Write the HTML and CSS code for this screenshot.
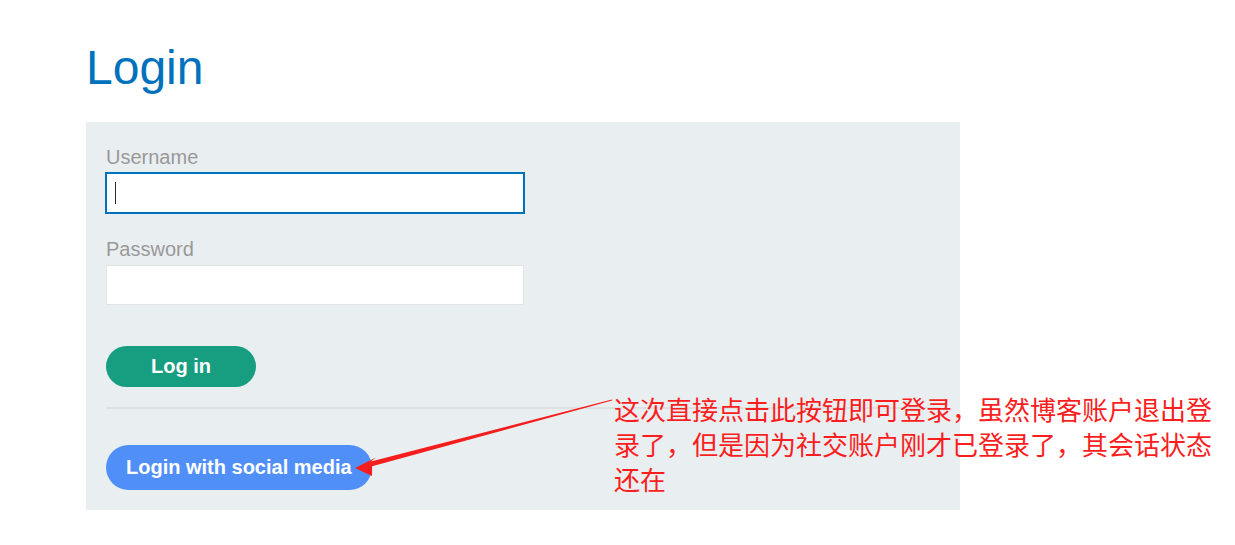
FILE: index.html
```html
<!DOCTYPE html>
<html lang="en">
<head>
<meta charset="utf-8">
<title>Login</title>
<link rel="stylesheet" href="styles.css">
</head>
<body>
  <main class="page">
    <h1 class="title">Login</h1>
    <section class="panel">
      <form class="login-form">
        <label class="field-label" for="username">Username</label>
        <div class="input-wrap">
          <input class="text-input is-focused" id="username" type="text">
          <span class="caret"></span>
        </div>
        <label class="field-label field-label--spaced" for="password">Password</label>
        <input class="text-input text-input--spaced" id="password" type="password">
        <button class="btn btn-login" type="button">Log in</button>
      </form>
      <hr class="divider">
      <button class="btn btn-social" type="button">Login with social media</button>
    </section>
  </main>

  <svg class="arrow" width="1235" height="545" viewBox="0 0 1235 545" aria-hidden="true">
    <polygon points="611.9,399.5 612.1,400.6 372.1,466.3 372,476 355,468 376,457.5 370.9,461.6" fill="#f51d1d"/>
  </svg>
  <p class="note">这次直接点击此按钮即可登录，虽然博客账户退出登<br>录了，但是因为社交账户刚才已登录了，其会话状态<br>还在</p>
</body>
</html>
```

FILE: styles.css
```css
html, body {
  margin: 0;
  padding: 0;
  background: #ffffff;
}

body {
  font-family: "Liberation Sans", Arial, sans-serif;
  position: relative;
  width: 1235px;
  height: 545px;
  overflow: hidden;
}

.page {
  padding: 40px 0 0 86px;
}

.title {
  margin: 0 0 27px 0;
  font-size: 48px;
  line-height: 55px;
  font-weight: normal;
  color: #0071bc;
}

.panel {
  width: 874px;
  box-sizing: border-box;
  padding: 23px 20px 20px 20px;
  background: #e9eef1;
}

.login-form {
  display: flex;
  flex-direction: column;
  align-items: flex-start;
  margin: 0;
}

.field-label {
  font-size: 20px;
  line-height: 24px;
  color: #999999;
}

.field-label--spaced {
  margin-top: 24px;
}

.input-wrap {
  position: relative;
  margin-top: 4px;
}

.text-input {
  display: block;
  width: 418px;
  height: 40px;
  box-sizing: border-box;
  margin: 0;
  padding: 0 8px;
  border: 1px solid #e3e3e3;
  background: #ffffff;
  font-family: inherit;
  font-size: 16px;
  outline: none;
}

.text-input--spaced {
  margin-top: 4px;
}

.text-input.is-focused {
  border-color: #0071bc;
  outline: 1px solid #0071bc;
}

.caret {
  position: absolute;
  left: 9px;
  top: 9px;
  width: 1px;
  height: 22px;
  background: #2b2b2b;
}

.btn {
  border: none;
  margin: 0;
  color: #ffffff;
  font-family: "Liberation Sans", Arial, sans-serif;
  font-weight: bold;
  font-size: 20px;
  border-radius: 25px;
  cursor: pointer;
}

.btn-login {
  margin-top: 41px;
  width: 150px;
  height: 41px;
  padding: 0;
  background: #179d80;
}

.divider {
  margin: 20px 0 0 0;
  border: none;
  height: 2px;
  background: #dde1e3;
}

.btn-social {
  margin-top: 36px;
  height: 45px;
  padding: 0 20px;
  background: #518ff8;
}

.arrow {
  position: absolute;
  left: 0;
  top: 0;
  pointer-events: none;
}

.note {
  position: absolute;
  left: 614px;
  top: 391px;
  margin: 0;
  width: 610px;
  font-family: "Noto Sans CJK SC", "Microsoft YaHei", sans-serif;
  font-size: 26px;
  line-height: 35px;
  color: #fa1e1e;
  white-space: nowrap;
}
```
